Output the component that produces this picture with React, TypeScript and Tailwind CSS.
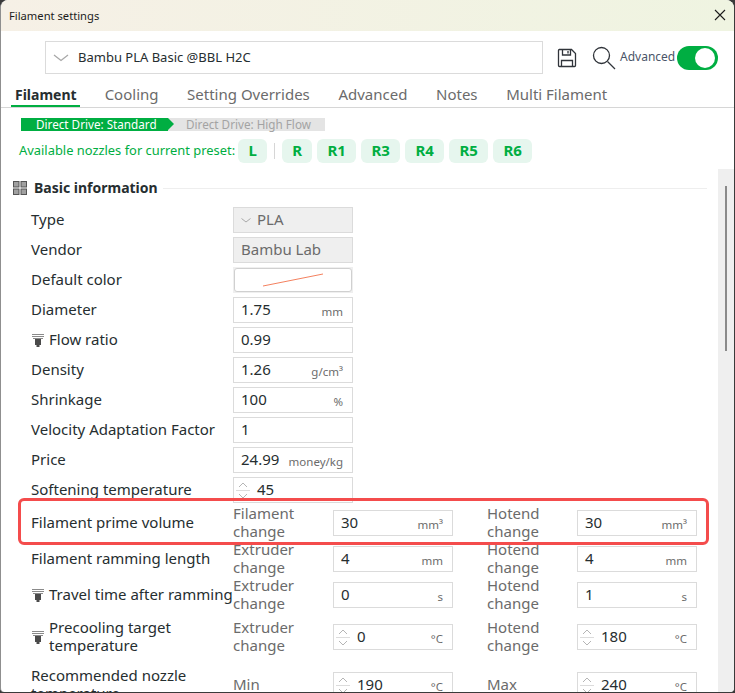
const font = "font-['Noto_Sans',sans-serif]";

const Nozzle = () => (
  <svg width="14" height="15" viewBox="0 0 14 15" className="shrink-0">
    <path d="M1 1h12v1H1zM1 3h12v1H1zM2 5h10v1H2z" fill="#8a8a8a" />
    <path d="M4 6h6v6H8.500v2h-3v-2H4z" fill="#4a4a4a" />
  </svg>
);

const Spin = () => (
  <div className="w-[18px] h-full flex flex-col items-center justify-center shrink-0">
    <svg width="14" height="11" viewBox="0 0 14 11">
      <path d="M3 7l4-4 4 4" fill="none" stroke="#b5b5b5" />
      <path d="M0 10.500h14" stroke="#dcdcdc" />
    </svg>
    <svg width="14" height="10" viewBox="0 0 14 10">
      <path d="M3 3l4 4 4-4" fill="none" stroke="#b5b5b5" />
    </svg>
  </div>
);

const Input = ({ value, unit, spin }: { value: string; unit?: string; spin?: boolean }) => (
  <div className={`w-[120px] h-[26px] border border-[#dbdbdb] bg-white flex items-center overflow-hidden shrink-0 ${spin ? "" : "pl-[7px]"} pr-[9px]`}>
    {spin && <Spin />}
    <span className={`text-[15px] text-[#262e30] pb-[2px] ${spin ? "ml-[5px]" : ""}`}>{value}</span>
    {unit && <span className="ml-auto text-[11.5px] text-[#6b6b6b] pt-[3px]">{unit}</span>}
  </div>
);

const Row = ({ label, nozzle, children }: { label: string; nozzle?: boolean; children: React.ReactNode }) => (
  <div className="h-[26px] mb-[4px] flex items-center">
    <div className="w-[202px] flex items-center gap-[4px] text-[15px] text-[#262e30] whitespace-nowrap shrink-0">
      {nozzle && <Nozzle />}
      <span className="pb-[2px]">{label}</span>
    </div>
    {children}
  </div>
);

const Side = ({ text, w }: { text: string[]; w: string }) => (
  <div className={`${w} shrink-0 text-[15px] leading-[18px] text-[#6b6b6b] pb-[2px]`}>
    {text.map((t) => (
      <div key={t}>{t}</div>
    ))}
  </div>
);

const Dual = ({
  label,
  nozzle,
  left,
  right,
  h,
  two,
}: {
  label: string[];
  nozzle?: boolean;
  left: React.ReactNode;
  right: React.ReactNode;
  h: string;
  two: [string[], string[]];
}) => (
  <div className={`${h} flex items-center`}>
    <div className="w-[202px] flex items-center gap-[4px] text-[15px] leading-[18px] text-[#262e30] whitespace-nowrap shrink-0">
      {nozzle && <Nozzle />}
      <div className="pb-[2px]">
        {label.map((t) => (
          <div key={t}>{t}</div>
        ))}
      </div>
    </div>
    <Side text={two[0]} w="w-[100px]" />
    {left}
    <div className="w-[34px] shrink-0" />
    <Side text={two[1]} w="w-[90px]" />
    {right}
  </div>
);

const Chip = ({ t, w = "w-[39px]" }: { t: string; w?: string }) => (
  <div className={`${w} h-[24px] pb-[2px] rounded-[6px] bg-[#e6f6ee] text-[#00ae42] text-[15px] font-bold flex items-center justify-center`}>
    {t}
  </div>
);

export default function App() {
  const tabs = ["Cooling", "Setting Overrides", "Advanced", "Notes", "Multi Filament"];

  return (
    <div className={`${font} relative w-[735px] h-[693px] overflow-hidden bg-[#3a3a3a]`}>
      <div className="h-[692px] w-[734px] bg-white rounded-t-[8px] rounded-b-[4px] border-l border-[#8f8f8f] overflow-hidden flex flex-col">
        <div className="h-[31px] shrink-0 bg-gradient-to-r from-[#f6f0e6] to-[#eff4e1] flex items-center justify-between pl-[8px] pr-[8px]">
          <span className="text-[11.2px] text-[#1c1c1c] pt-[1px]">Filament settings</span>
          <svg width="12" height="12" viewBox="0 0 12 12" className="mb-[1px]">
            <path d="M1 1l10 10M11 1L1 11" stroke="#1c1c1c" strokeWidth="1.100" />
          </svg>
        </div>

        <div className="flex items-center h-[33px] mt-[10px] pl-[44px] shrink-0">
          <div className="w-[498px] h-[33px] border border-[#dbdbdb] flex items-center pl-[7px] gap-[9px]">
            <svg width="16" height="8" viewBox="0 0 16 8">
              <path d="M1 1l7 5.500L15 1" fill="none" stroke="#a8a8a8" strokeWidth="1.300" />
            </svg>
            <span className="text-[13px] text-[#262e30]">Bambu PLA Basic @BBL H2C</span>
          </div>
          <svg width="20" height="20" viewBox="0 0 20 20" className="ml-[14px]">
            <path d="M2 1.500h12.500l4 4v12a1 1 0 0 1-1 1h-15a1 1 0 0 1-1-1v-15a1 1 0 0 1 1-1z" fill="none" stroke="#30343a" strokeWidth="1.300" />
            <path d="M5.500 2v5h8V2M11 3v2.500M4.500 18.500V12.500h11v6" fill="none" stroke="#30343a" strokeWidth="1.300" />
          </svg>
          <svg width="24" height="24" viewBox="0 0 24 24" className="ml-[15px]">
            <circle cx="9.500" cy="9.500" r="8" fill="none" stroke="#30343a" strokeWidth="1.300" />
            <path d="M15.500 15.500l7.500 7.500" stroke="#30343a" strokeWidth="1.300" />
          </svg>
          <span className="text-[12px] text-[#4a5568] ml-[4px] pb-[2px]">Advanced</span>
          <div className="w-[41px] h-[24px] ml-[2px] rounded-full bg-[#00ae42] flex items-center justify-end pr-[3px]">
            <div className="w-[20px] h-[20px] rounded-full bg-white" />
          </div>
        </div>

        <div className="flex h-[33px] mt-[1px] pt-[5px] border-b border-[#d6d6d6] shrink-0 pl-[13px] text-[15px] text-[#6b6b6b]">
          <div className="relative font-bold text-[14px] text-[#262e30] px-[1px] mr-[27px] leading-[29px]">
            Filament
            <div className="absolute left-[-3px] right-[-2px] bottom-0 h-[2px] bg-[#00ae42]" />
          </div>
          {tabs.map((t) => (
            <div key={t} className="mr-[28.600px] leading-[29px]">
              {t}
            </div>
          ))}
        </div>

        <div className="flex h-[13px] mt-[10px] ml-[20px] w-[304px] bg-[#e4e4e4] text-[11.7px] leading-[13px] shrink-0 whitespace-nowrap">
          <div className="w-[147px] bg-[#00ae42] text-white pl-[15px]">Direct Drive: Standard</div>
          <div className="w-0 h-0 border-y-[6.500px] border-y-transparent border-l-[6px] border-l-[#00ae42]" />
          <div className="pl-[12px] text-[#a3a3a3]">Direct Drive: High Flow</div>
        </div>

        <div className="flex items-center h-[24px] mt-[8px] ml-[18px] shrink-0 text-[12.9px] text-[#00ae42]">
          <span className="mr-[3px]">Available nozzles for current preset:</span>
          <Chip t="L" w="w-[29px]" />
          <div className="w-px h-[16px] bg-[#d6d6d6] mx-[7px]" />
          <div className="flex gap-[5px]">
            <Chip t="R" w="w-[30px]" />
            <Chip t="R1" />
            <Chip t="R3" />
            <Chip t="R4" />
            <Chip t="R5" />
            <Chip t="R6" />
          </div>
        </div>

        <div className="relative flex-1 min-h-0 overflow-hidden">
          <div className="flex items-center h-[20px] mt-[15px] ml-[12px] mr-[27px]">
            <svg width="14" height="14" viewBox="0 0 14 14" fill="#a0a0a0" stroke="#555555" className="shrink-0">
              <rect x="0.500" y="0.500" width="5.500" height="5.500" />
              <rect x="8" y="0.500" width="5.500" height="5.500" />
              <rect x="0.500" y="8" width="5.500" height="5.500" />
              <rect x="8" y="8" width="5.500" height="5.500" />
            </svg>
            <span className="ml-[7px] text-[14px] font-bold text-[#262e30] pb-[2px]">Basic information</span>
            <div className="flex-1 h-px bg-[#eeeeee] ml-[5px]" />
          </div>

          <div className="pl-[30px] pt-[9px]">
            <Row label="Type">
              <div className="w-[120px] h-[26px] border border-[#dbdbdb] bg-[#efefef] flex items-center pl-[7px] gap-[6px] text-[15px] text-[#6b6b6b]">
                <svg width="10" height="5" viewBox="0 0 10 5">
                  <path d="M0.500 0.500L5 4l4.500-3.500" fill="none" stroke="#a8a8a8" />
                </svg>
                <span className="pb-[2px]">PLA</span>
              </div>
            </Row>
            <Row label="Vendor">
              <div className="w-[120px] h-[26px] border border-[#dbdbdb] bg-[#efefef] flex items-center pl-[7px] pb-[2px] text-[15px] text-[#6b6b6b]">
                Bambu Lab
              </div>
            </Row>
            <Row label="Default color">
              <div className="w-[120px] h-[26px] bg-[#efefef] p-[1px]">
                <div className="h-full rounded-[3px] border border-[#d0d0d0] bg-white flex items-center justify-center">
                  <svg width="62" height="14" viewBox="0 0 62 14">
                    <path d="M1 13L61 1" stroke="#f4815f" />
                  </svg>
                </div>
              </div>
            </Row>
            <Row label="Diameter">
              <Input value="1.75" unit="mm" />
            </Row>
            <Row label="Flow ratio" nozzle>
              <Input value="0.99" />
            </Row>
            <Row label="Density">
              <Input value="1.26" unit="g/cm³" />
            </Row>
            <Row label="Shrinkage">
              <Input value="100" unit="%" />
            </Row>
            <Row label="Velocity Adaptation Factor">
              <Input value="1" />
            </Row>
            <Row label="Price">
              <Input value="24.99" unit="money/kg" />
            </Row>
            <Row label="Softening temperature">
              <Input value="45" spin />
            </Row>

            <div className="-mt-[2px]">
              <Dual
                label={["Filament prime volume"]}
                two={[["Filament", "change"], ["Hotend", "change"]]}
                left={<Input value="30" unit="mm³" />}
                right={<Input value="30" unit="mm³" />}
                h="h-[36px]"
              />
              <Dual
                label={["Filament ramming length"]}
                two={[["Extruder", "change"], ["Hotend", "change"]]}
                left={<Input value="4" unit="mm" />}
                right={<Input value="4" unit="mm" />}
                h="h-[36px]"
              />
              <Dual
                label={["Travel time after ramming"]}
                nozzle
                two={[["Extruder", "change"], ["Hotend", "change"]]}
                left={<Input value="0" unit="s" />}
                right={<Input value="1" unit="s" />}
                h="h-[36px]"
              />
              <Dual
                label={["Precooling target", "temperature"]}
                nozzle
                two={[["Extruder", "change"], ["Hotend", "change"]]}
                left={<Input value="0" unit="°C" spin />}
                right={<Input value="180" unit="°C" spin />}
                h="h-[48px]"
              />
              <Dual
                label={["Recommended nozzle", "temperature"]}
                two={[["Min"], ["Max"]]}
                left={<Input value="190" unit="°C" spin />}
                right={<Input value="240" unit="°C" spin />}
                h="h-[48px]"
              />
            </div>
          </div>

          <div className="absolute right-0 top-[6px] bottom-0 w-[16px] bg-[#efefef]">
            <div className="absolute left-[7px] top-[17px] w-[2px] h-[165px] bg-[#8a8a8a]" />
          </div>
        </div>
      </div>

      <div className="absolute left-[18px] top-[498px] w-[691px] h-[47px] border-[3px] border-[#f44c4c] rounded-[6px]" />
    </div>
  );
}
